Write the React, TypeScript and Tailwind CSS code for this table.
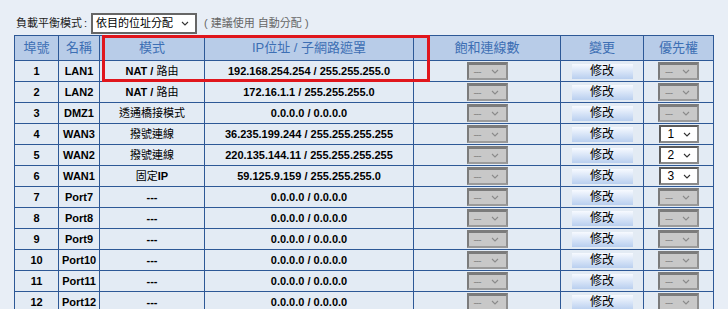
import React from 'react';

interface PortRow {
    id: number;
    name: string;
    mode: string;
    ip: string;
    priority?: string;
}

const rows: PortRow[] = [
    { id: 1, name: 'LAN1', mode: 'NAT / 路由', ip: '192.168.254.254 / 255.255.255.0' },
    { id: 2, name: 'LAN2', mode: 'NAT / 路由', ip: '172.16.1.1 / 255.255.255.0' },
    { id: 3, name: 'DMZ1', mode: '透通橋接模式', ip: '0.0.0.0 / 0.0.0.0' },
    { id: 4, name: 'WAN3', mode: '撥號連線', ip: '36.235.199.244 / 255.255.255.255', priority: '1' },
    { id: 5, name: 'WAN2', mode: '撥號連線', ip: '220.135.144.11 / 255.255.255.255', priority: '2' },
    { id: 6, name: 'WAN1', mode: '固定IP', ip: '59.125.9.159 / 255.255.255.0', priority: '3' },
    { id: 7, name: 'Port7', mode: '---', ip: '0.0.0.0 / 0.0.0.0' },
    { id: 8, name: 'Port8', mode: '---', ip: '0.0.0.0 / 0.0.0.0' },
    { id: 9, name: 'Port9', mode: '---', ip: '0.0.0.0 / 0.0.0.0' },
    { id: 10, name: 'Port10', mode: '---', ip: '0.0.0.0 / 0.0.0.0' },
    { id: 11, name: 'Port11', mode: '---', ip: '0.0.0.0 / 0.0.0.0' },
    { id: 12, name: 'Port12', mode: '---', ip: '0.0.0.0 / 0.0.0.0' },
];

const headers = ['埠號', '名稱', '模式', 'IP位址 / 子網路遮罩', '飽和連線數', '變更', '優先權'];
const colWidths = ['w-[44px]', 'w-[41px]', 'w-[105px]', 'w-[209px]', 'w-[147px]', 'w-[83px]', 'w-[70px]'];

// chinese glyphs have no bold face on the device, keep them regular
const mixed = (text: string) =>
    text.split(/([\u3400-\u9fff]+)/).map((part, i) =>
        /[\u3400-\u9fff]/.test(part) ? (
            <span key={i} className="font-normal">{part}</span>
        ) : (
            <React.Fragment key={i}>{part}</React.Fragment>
        )
    );

const Chevron = ({ color }: { color: string }) => (
    <svg width="8" height="5" viewBox="0 0 8 5" className="shrink-0">
        <path d="M1 1 L4 4 L7 1" fill="none" stroke={color} strokeWidth="1.1" />
    </svg>
);

const MiniSelect = ({ value }: { value?: string }) =>
    value ? (
        <div className="mx-auto flex h-[18px] w-[40px] items-center justify-between border-2 border-[#5a5a5a] border-r-[#8a8a8a] border-b-[#8a8a8a] bg-white pl-[7px] pr-[6px] text-[12px] font-normal text-black">
            <span>{value}</span>
            <Chevron color="#333" />
        </div>
    ) : (
        <div className="mx-auto flex h-[18px] w-[41px] items-center justify-between border-2 border-t-[3px] border-[#7b7b7b] border-r-[#8f8f8f] border-b-[#9a9a9a] bg-[#c8c8c8] pl-[5px] pr-[7px] text-[10px] font-normal text-[#8a8a8a]">
            <span className="tracking-[-1px]">---</span>
            <Chevron color="#8a8a8a" />
        </div>
    );

const App: React.FC = () => {
    return (
        <div
            className="relative h-[309px] w-[728px] overflow-hidden bg-[#e8eef6] pl-[14px] pt-[13px]"
            style={{ fontFamily: '"Liberation Sans", Arial, "Noto Sans CJK TC", sans-serif' }}
        >
            <div className="flex h-[20px] items-center text-[11px] text-[#222]">
                <span className="pl-[2px]">負載平衡模式</span>
                <span className="ml-[2px] mr-[4px]">:</span>
                <div className="flex h-[21px] w-[106px] shrink-0 items-center border-2 border-[#666] bg-white pl-[3px] pr-[6px] text-[11px] text-black">
                    <span className="flex-1">依目的位址分配</span>
                    <Chevron color="#333" />
                </div>
                <span className="ml-[7px] text-[#666]">( 建議使用 自動分配 )</span>
            </div>

            <table className="mt-[2px] w-[700px] table-fixed border-collapse text-center text-[11px] font-bold text-black">
                <colgroup>
                    {colWidths.map((w, i) => (
                        <col key={i} className={w} />
                    ))}
                </colgroup>
                <thead>
                    <tr className="h-[25px] bg-[#b8cce8]">
                        {headers.map((h) => (
                            <th key={h} className="border border-[#2d5896] p-0 text-[13px] font-normal text-[#3d6fb4]">
                                {h}
                            </th>
                        ))}
                    </tr>
                </thead>
                <tbody>
                    {rows.map((r) => (
                        <tr key={r.id} className="h-[21px] bg-[#e3ebf4]">
                            <td className="border border-[#2d5896] p-0">{r.id}</td>
                            <td className="border border-[#2d5896] p-0">{r.name}</td>
                            <td className="border border-[#2d5896] p-0">{mixed(r.mode)}</td>
                            <td className="border border-[#2d5896] p-0">{r.ip}</td>
                            <td className="border border-[#2d5896] p-0">
                                <MiniSelect />
                            </td>
                            <td className="border border-[#2d5896] p-0">
                                <button className="mx-auto block h-[15px] w-[61px] bg-gradient-to-b from-[#f7faff] to-[#b9cfef] text-[12px] font-normal leading-[15px] text-black">
                                    修改
                                </button>
                            </td>
                            <td className="border border-[#2d5896] p-0">
                                <MiniSelect value={r.priority} />
                            </td>
                        </tr>
                    ))}
                </tbody>
            </table>

            <div className="pointer-events-none absolute left-[102px] top-[35px] h-[47px] w-[328px] border-[3px] border-[#e0161c]" />
        </div>
    );
};

export default App;
